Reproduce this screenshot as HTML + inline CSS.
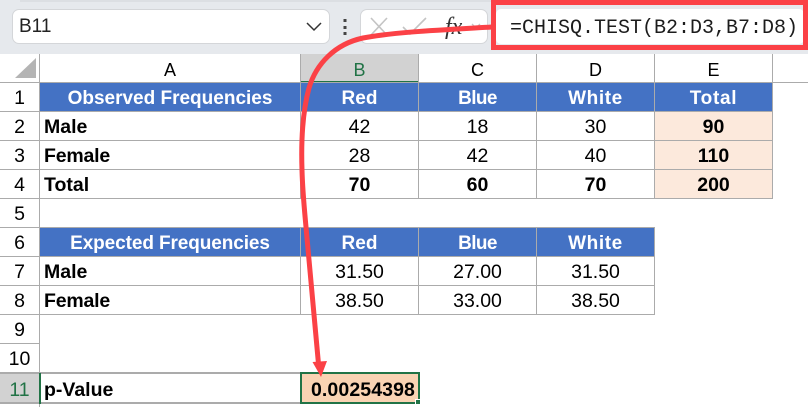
<!DOCTYPE html>
<html><head><meta charset="utf-8">
<style>
html,body{margin:0;padding:0;background:#fff}
#p{position:relative;width:808px;height:407px;overflow:hidden;background:#fff;font-family:"Liberation Sans",sans-serif;color:#000}
#p div{position:absolute;box-sizing:border-box}
.t{font-size:19.5px;line-height:28px;height:28px;margin-top:1px;text-align:center;white-space:nowrap}
.b{font-weight:bold}
.w{color:#fff;font-weight:bold;font-size:19px}
.l{text-align:left}
.h{left:0;width:39px;text-align:center}
.c{font-size:18px}
.hl{background:#ababab;height:1px;left:0}
.vl{background:#ababab;width:1px}
</style></head><body>
<div id="p">
<!-- toolbar -->
<div style="left:0;top:0;width:808px;height:54px;background:#e6e9ed"></div>
<div style="left:20px;top:0;width:788px;height:2px;background:#dcdfe3"></div>
<div style="left:12px;top:9px;width:318px;height:35px;background:#fff;border:1px solid #d4d6d9;border-radius:7px"></div>
<div style="left:19px;top:13px;font-size:19px;line-height:28px;color:#222">B11</div>
<div style="left:360px;top:9px;width:128px;height:35px;background:#fff;border:1px solid #d4d6d9;border-radius:7px"></div>
<div style="left:496px;top:9px;width:308px;height:35px;background:#fff;border-radius:5px"></div>
<div style="left:510px;top:15px;font-family:'Liberation Mono',monospace;font-size:20px;line-height:28px;color:#1c1c1c;white-space:nowrap">=CHISQ.TEST(B2:D3,B7:D8)</div>
<div style="left:445px;top:13px;font-family:'Liberation Serif',serif;font-style:italic;font-size:24px;line-height:28px;color:#333;white-space:nowrap">fx</div>
<svg style="position:absolute;left:0;top:0" width="808" height="54" fill="none">
<path d="M307 23l7 7 7-7" stroke="#333" stroke-width="1.5"/>
<rect x="343.5" y="19" width="3" height="3" fill="#444"/><rect x="343.5" y="26" width="3" height="3" fill="#444"/><rect x="343.5" y="32" width="3" height="3" fill="#444"/>
<path d="M371 18l16 17M387 18l-16 17" stroke="#c4c4c4" stroke-width="1.6"/>
<path d="M403 27l7 7 16-16" stroke="#c4c4c4" stroke-width="1.6"/>
<path d="M472 24l4 4 4-4" stroke="#c4c4c4" stroke-width="1.3"/>
</svg>
<!-- header row -->
<div style="left:300px;top:54px;width:119px;height:28px;background:#d2d2d2"></div>
<div style="left:300px;top:81px;width:119px;height:2px;background:#217346"></div>
<div style="left:0;top:54px;width:40px;height:29px;background:#fff"></div>
<svg style="position:absolute;left:0;top:54px" width="40" height="29"><path d="M36 4V24H15Z" fill="#b4b4b4"/></svg>
<div class="t c" style="left:40px;top:55px;width:260px">A</div>
<div class="t c" style="left:301px;top:55px;width:117px;color:#217346">B</div>
<div class="t c" style="left:419px;top:55px;width:117px">C</div>
<div class="t c" style="left:537px;top:55px;width:117px">D</div>
<div class="t c" style="left:655px;top:55px;width:117px">E</div>
<!-- fills -->
<div style="left:40px;top:83px;width:732px;height:28px;background:#4472c4"></div>
<div style="left:40px;top:228px;width:614px;height:28px;background:#4472c4"></div>
<div style="left:655px;top:112px;width:117px;height:86px;background:#fce9dc"></div>
<div style="left:0;top:373px;width:39px;height:30px;background:#d2d2d2"></div>
<div style="left:301px;top:374px;width:117px;height:28px;background:#f9d3b3"></div>
<!-- horizontal lines -->
<div class="hl" style="top:82px;width:808px"></div>
<div class="hl" style="top:111px;width:773px"></div>
<div class="hl" style="top:140px;width:773px"></div>
<div class="hl" style="top:169px;width:773px"></div>
<div class="hl" style="top:198px;width:773px"></div>
<div class="hl" style="top:227px;width:655px"></div>
<div class="hl" style="top:256px;width:655px"></div>
<div class="hl" style="top:285px;width:655px"></div>
<div class="hl" style="top:314px;width:655px"></div>
<div class="hl" style="top:343px;width:39px"></div>
<div class="hl" style="top:372px;width:420px;height:2px"></div>
<div class="hl" style="top:402px;width:420px;height:2px"></div>
<!-- vertical lines -->
<div class="vl" style="left:39px;top:54px;height:353px"></div>
<div class="vl" style="left:300px;top:54px;height:144px"></div>
<div class="vl" style="left:418px;top:54px;height:144px"></div>
<div class="vl" style="left:536px;top:54px;height:144px"></div>
<div class="vl" style="left:654px;top:54px;height:144px"></div>
<div class="vl" style="left:772px;top:54px;height:144px"></div>
<div class="vl" style="left:300px;top:227px;height:88px"></div>
<div class="vl" style="left:418px;top:227px;height:88px"></div>
<div class="vl" style="left:536px;top:227px;height:88px"></div>
<div class="vl" style="left:654px;top:227px;height:88px"></div>
<!-- row headers -->
<div class="t h" style="top:83px">1</div>
<div class="t h" style="top:112px">2</div>
<div class="t h" style="top:141px">3</div>
<div class="t h" style="top:170px">4</div>
<div class="t h" style="top:199px">5</div>
<div class="t h" style="top:228px">6</div>
<div class="t h" style="top:257px">7</div>
<div class="t h" style="top:286px">8</div>
<div class="t h" style="top:315px">9</div>
<div class="t h" style="top:344px">10</div>
<div class="t h" style="top:375px;color:#217346">11</div>
<!-- row 1 -->
<div class="t w" style="left:40px;top:84px;width:260px">Observed Frequencies</div>
<div class="t w" style="left:301px;top:84px;width:117px">Red</div>
<div class="t w" style="left:419px;top:84px;width:117px;letter-spacing:-.6px">Blue</div>
<div class="t w" style="left:537px;top:84px;width:117px;letter-spacing:.6px">White</div>
<div class="t w" style="left:655px;top:84px;width:117px;letter-spacing:.7px">Total</div>
<!-- row 2 -->
<div class="t b l" style="left:44px;top:112px">Male</div>
<div class="t" style="left:301px;top:112px;width:117px">42</div>
<div class="t" style="left:419px;top:112px;width:117px">18</div>
<div class="t" style="left:537px;top:112px;width:117px">30</div>
<div class="t b" style="left:655px;top:112px;width:117px">90</div>
<!-- row 3 -->
<div class="t b l" style="left:44px;top:141px;letter-spacing:-.2px">Female</div>
<div class="t" style="left:301px;top:141px;width:117px">28</div>
<div class="t" style="left:419px;top:141px;width:117px">42</div>
<div class="t" style="left:537px;top:141px;width:117px">40</div>
<div class="t b" style="left:655px;top:141px;width:117px">110</div>
<!-- row 4 -->
<div class="t b l" style="left:44px;top:170px">Total</div>
<div class="t b" style="left:301px;top:170px;width:117px">70</div>
<div class="t b" style="left:419px;top:170px;width:117px">60</div>
<div class="t b" style="left:537px;top:170px;width:117px">70</div>
<div class="t b" style="left:655px;top:170px;width:117px">200</div>
<!-- row 6 -->
<div class="t w" style="left:40px;top:229px;width:260px;letter-spacing:-.1px">Expected Frequencies</div>
<div class="t w" style="left:301px;top:229px;width:117px">Red</div>
<div class="t w" style="left:419px;top:229px;width:117px;letter-spacing:-.6px">Blue</div>
<div class="t w" style="left:537px;top:229px;width:117px;letter-spacing:.6px">White</div>
<!-- row 7 -->
<div class="t b l" style="left:44px;top:257px">Male</div>
<div class="t" style="left:301px;top:257px;width:117px">31.50</div>
<div class="t" style="left:419px;top:257px;width:117px">27.00</div>
<div class="t" style="left:537px;top:257px;width:117px">31.50</div>
<!-- row 8 -->
<div class="t b l" style="left:44px;top:286px;letter-spacing:-.2px">Female</div>
<div class="t" style="left:301px;top:286px;width:117px">38.50</div>
<div class="t" style="left:419px;top:286px;width:117px">33.00</div>
<div class="t" style="left:537px;top:286px;width:117px">38.50</div>
<!-- row 11 -->
<div style="left:39px;top:373px;width:2px;height:31px;background:#217346"></div>
<div class="t b l" style="left:44px;top:375px">p-Value</div>
<div class="t b" style="left:300px;top:375px;width:115px;text-align:right;letter-spacing:.1px">0.00254398</div>
<div style="left:300px;top:372px;width:120px;height:32px;border:2px solid #217346"></div>
<div style="left:415px;top:399px;width:6px;height:6px;background:#217346;border:1px solid #fff"></div>
<!-- annotations -->
<div style="left:491px;top:0;width:317px;height:50px;border:5px solid #fb4146"></div>
<svg style="position:absolute;left:0;top:0" width="808" height="407" fill="none">
<path d="M492 27C440 30 395 32 363 38C335 44 316 64 309 88C303 110 301 140 302 170C302.5 190 304 205 306 227L318.5 364" stroke="#fb4146" stroke-width="5"/>
<path d="M312.5 362L327 361L321 377Z" fill="#fb4146"/>
</svg>
</div>
</body></html>
